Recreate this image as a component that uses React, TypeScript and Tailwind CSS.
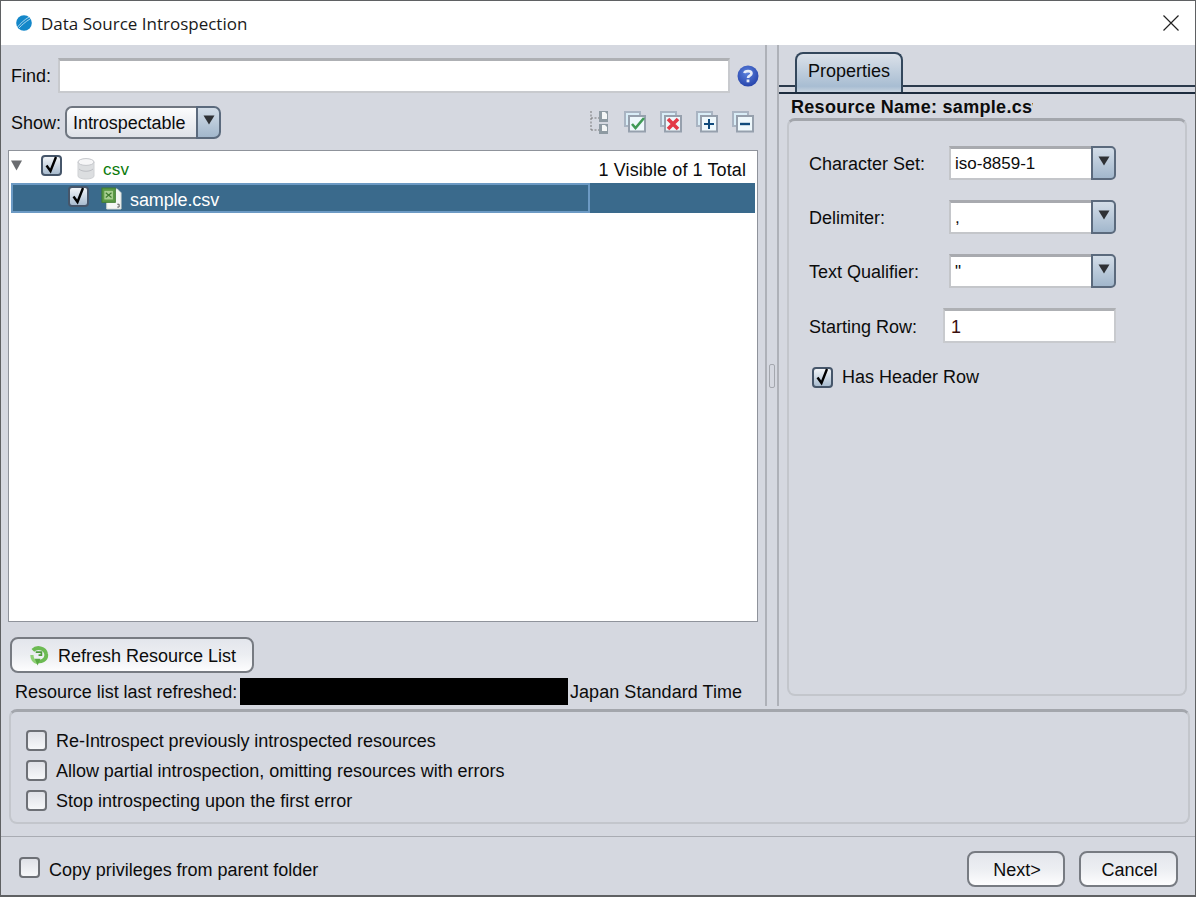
import React from "react";

const body = "font-['Liberation_Sans',Arial,sans-serif] text-[18px] leading-[22px] text-[#0c0c0c]";

function CheckBox({ checked, className = "" }: { checked?: boolean; className?: string }) {
  return (
    <div
      className={`relative w-[21px] h-[21px] shrink-0 rounded-[4px] border-2 ${
        checked
          ? "border-[#46566a] bg-gradient-to-b from-[#f2f5f8] to-[#a9bccf]"
          : "border-[#6d7076] bg-gradient-to-b from-[#dfe1e7] to-[#f6f7f9]"
      } ${className}`}
    >
      {checked && (
        <svg viewBox="0 0 21 21" className="absolute left-[-2px] top-[-3px] w-[21px] h-[21px]">
          <path d="M5.5 11.5 L9.5 17 L15 3" fill="none" stroke="#000" strokeWidth="2.4" />
        </svg>
      )}
    </div>
  );
}

function Arrow() {
  return (
    <svg viewBox="0 0 12 10" className="w-[12px] h-[10px]">
      <path d="M0.5 0.5 H11.5 L6 9.5 Z" fill="#2e3135" />
    </svg>
  );
}

function Combo({ value, label }: { value: string; label: string }) {
  return (
    <div className="flex items-center h-[34px]">
      <div className="w-[140px] shrink-0 pt-[2px]">{label}</div>
      <div className="flex w-[167px] h-[34px]">
        <div className="flex-1 bg-white border-t-[3px] border-t-[#a8aaaf] border-l-2 border-l-[#c4c6ca] border-b-2 border-b-[#c4c6ca] pl-[4px] pt-[4px] text-[17px]">
          {value}
        </div>
        <div className="w-[25px] flex justify-center pt-[8px] rounded-r-[5px] border-2 border-[#5b6a7d] bg-gradient-to-b from-[#d3dde8] to-[#a2b7cc]">
          <Arrow />
        </div>
      </div>
    </div>
  );
}

function Logo() {
  return (
    <svg viewBox="0 0 16 16" className="w-[16px] h-[16px] mb-[1px]">
      <circle cx="8" cy="8" r="7.8" fill="#1387c9" />
      <path d="M1.5 12 C5 8 8 5 13 2 M3 13 C6 10 9 7 14 4" stroke="#cfe8f6" strokeWidth="0.8" fill="none" />
    </svg>
  );
}

function HelpIcon() {
  return (
    <svg viewBox="0 0 22 22" className="w-[22px] h-[22px]">
      <defs>
        <radialGradient id="helpBlue" cx="45%" cy="35%" r="70%">
          <stop offset="0%" stopColor="#5b82dd" />
          <stop offset="100%" stopColor="#2440a8" />
        </radialGradient>
      </defs>
      <circle cx="11" cy="11" r="10.5" fill="url(#helpBlue)" />
      <path d="M7.5 8.2 C7.8 5.5 14.5 5.2 14.5 8.5 C14.5 10.8 11 10.6 11 13" fill="none" stroke="#e6ecf8" strokeWidth="2.6" />
      <rect x="9.6" y="14.5" width="2.8" height="2.8" fill="#e6ecf8" />
    </svg>
  );
}

function TreeIcon() {
  return (
    <svg viewBox="0 0 20 24" className="w-[20px] h-[24px]">
      <path d="M1 1 V20 M1 8 H10 M1 20 H10" stroke="#777" strokeWidth="1" strokeDasharray="2 1.5" fill="none" />
      <rect x="9" y="1" width="9" height="11" fill="#8e9aa2" />
      <path d="M12 2 H15 L17 4 V9 H12 Z" fill="#f4f6f6" />
      <rect x="9" y="14" width="9" height="10" fill="#8e9aa2" />
      <path d="M12 15 H15 L17 17 V21 H12 Z" fill="#f4f6f6" />
    </svg>
  );
}

function ToolIcon({ children }: { children: React.ReactNode }) {
  return (
    <svg viewBox="0 0 22 22" className="w-[22px] h-[22px]">
      <rect x="1" y="1" width="15" height="14" fill="#d9edf7" stroke="#a9b4c2" strokeWidth="2" />
      <rect x="5" y="5" width="16" height="15.5" fill="#eef8fc" stroke="#96a0ad" strokeWidth="2" />
      {children}
    </svg>
  );
}

function DbIcon() {
  return (
    <svg viewBox="0 0 18 22" className="w-[18px] h-[22px]">
      <path d="M1 4 V18 C1 22 17 22 17 18 V4 Z" fill="#dcdee0" stroke="#cfd1d4" />
      <ellipse cx="9" cy="4" rx="8" ry="3.4" fill="#f6f6f7" stroke="#c4c6ca" />
      <path d="M2 11 C5 14 13 14 16 11" stroke="#bcbec3" fill="none" />
    </svg>
  );
}

function SheetIcon() {
  return (
    <svg viewBox="0 0 22 24" className="w-[21px] h-[23px]">
      <path d="M6 2 H17 L21 6 V23 H6 Z" fill="#f5f7f5" stroke="#d5dbd5" />
      <rect x="1" y="1" width="14" height="15" fill="#5c9a45" stroke="#3e7b2e" />
      <rect x="3.5" y="4" width="9" height="9" fill="#a9cf92" />
      <path d="M5 6 L11 11 M11 6 L5 11" stroke="#3e7b2e" strokeWidth="1.2" />
      <path d="M17 18 H19 V21 H17" stroke="#555" fill="none" />
    </svg>
  );
}

function RefreshIcon() {
  return (
    <svg viewBox="0 0 20 20" className="w-[19px] h-[20px] ml-[2px]">
      <path d="M3 4 C7 0 16 1 17 8 C18 14 11 17 7 15" fill="none" stroke="#6cba53" strokeWidth="4" />
      <path d="M2 9 C2 13 4 16 8 17" fill="none" stroke="#8fd076" strokeWidth="3.4" />
      <path d="M6 6 H12 V9 H9" fill="none" stroke="#4f9c3c" strokeWidth="1.8" />
      <path d="M5 13 L11 13 L8 20 Z" fill="#58a942" />
    </svg>
  );
}

function Button({ children, className = "" }: { children: React.ReactNode; className?: string }) {
  return (
    <div
      className={`flex items-center justify-center h-[36px] rounded-[8px] border-2 border-[#777b82] bg-gradient-to-b from-[#e3e6ec] via-[#eceef2] to-[#fdfdfe] ${className}`}
    >
      {children}
    </div>
  );
}

function Panel({ className = "", children }: { className?: string; children?: React.ReactNode }) {
  return (
    <div
      className={`rounded-[8px] border-2 border-[#c3c6cc] border-t-[3px] border-t-[#a3a6ac] ${className}`}
    >
      {children}
    </div>
  );
}

export default function App() {
  return (
    <div className={`w-[1196px] h-[897px] bg-white flex flex-col border border-b-2 border-[#5f6163] overflow-hidden ${body}`}>
      {/* Title bar */}
      <div className="h-[44px] shrink-0 bg-white flex items-center pl-[15px] pr-[16px]">
        <Logo />
        <span className="ml-[9px] pt-[1px] font-['Open_Sans',sans-serif] text-[17px] text-[#1a1a1a]">Data Source Introspection</span>
        <svg viewBox="0 0 16 16" className="w-[16px] h-[16px] ml-auto">
          <path d="M0.5 0.5 L15.5 15.5 M15.5 0.5 L0.5 15.5" stroke="#222" strokeWidth="1.2" />
        </svg>
      </div>

      <div className="flex-1 flex flex-col bg-[#d5d8e0]">
        <div className="flex h-[661px] shrink-0">
          {/* Left pane */}
          <div className="w-[764px] shrink-0 pl-[7px] pr-[6px] flex flex-col">
            <div className="flex items-center h-[35px] mt-[13px]">
              <span className="w-[50px] pl-[3px] shrink-0">Find:</span>
              <div className="w-[674px] h-[35px] bg-white border-t-[3px] border-t-[#aeb0b4] border-x-2 border-x-[#c8cace] border-b-2 border-b-[#c8cace]" />
              <div className="ml-[7px]">
                <HelpIcon />
              </div>
            </div>

            <div className="flex items-center h-[33px] mt-[13px]">
              <span className="w-[57px] pl-[3px] shrink-0">Show:</span>
              <div className="flex w-[156px] h-[33px]">
                <div className="flex-1 rounded-l-[7px] border-2 border-r-0 border-[#6f7680] bg-gradient-to-b from-[#fbfcfd] to-[#dfe2e8] pl-[6px] pt-[4px] tracking-[-0.05px]">
                  Introspectable
                </div>
                <div className="w-[25px] flex justify-center pt-[7px] rounded-r-[7px] border-2 border-[#5b6a7d] bg-gradient-to-b from-[#d3dde8] to-[#a2b7cc]">
                  <Arrow />
                </div>
              </div>
              <div className="ml-auto flex items-center gap-[14px] pr-[5px] mb-[2px]">
                <TreeIcon />
                <ToolIcon>
                  <path d="M8 13 L11.5 17 L20 7" fill="none" stroke="#3f9a56" strokeWidth="2.6" />
                </ToolIcon>
                <ToolIcon>
                  <path d="M8 8 L18 18 M18 8 L8 18" fill="none" stroke="#e23a48" strokeWidth="3.6" />
                </ToolIcon>
                <ToolIcon>
                  <path d="M8 13 H18 M13 8 V18" fill="none" stroke="#0f4a7c" strokeWidth="2" />
                </ToolIcon>
                <ToolIcon>
                  <path d="M8 13 H18" fill="none" stroke="#0f4a7c" strokeWidth="2.4" />
                </ToolIcon>
              </div>
            </div>

            {/* Tree */}
            <div className="mt-[11px] w-[750px] h-[472px] shrink-0 bg-white border border-[#8f939b] pt-[1px] px-[2px]">
              <div className="flex items-center h-[31px] relative">
                <svg viewBox="0 0 12 11" className="absolute left-[0px] top-[8px] w-[11px] h-[11px]">
                  <path d="M0 0 H12 L6 11 Z" fill="#6a6c70" />
                </svg>
                <CheckBox checked className="ml-[30px] mb-[4px]" />
                <div className="ml-[15px] mt-[3px]">
                  <DbIcon />
                </div>
                <span className="ml-[8px] mt-[5px] text-[#0b7a0b] text-[17px] tracking-[0.3px]">csv</span>
                <span className="ml-auto mr-[9px] mt-[4px] tracking-[0.1px]">1 Visible of 1 Total</span>
              </div>
              <div className="flex h-[30px] bg-[#3a6a8c] text-white">
                <div className="w-[579px] flex items-center border-2 border-[#6c9ac4]">
                  <CheckBox checked className="ml-[55px] mb-[3px] border-[#2c3a4a]" />
                  <div className="ml-[12px]">
                    <SheetIcon />
                  </div>
                  <span className="ml-[8px] pt-[3px] tracking-[-0.1px]">sample.csv</span>
                </div>
              </div>
            </div>

            <Button className="mt-[15px] ml-[2px] w-[244px] shrink-0 pt-[1px]">
              <RefreshIcon />
              <span className="ml-[8px] pl-[1px]">Refresh Resource List</span>
            </Button>

            <div className="flex items-center h-[27px] mt-[5px] pl-[7px]">
              <span className="w-[225px] shrink-0 pt-[1px] tracking-[-0.03px]">Resource list last refreshed:</span>
              <div className="w-[328px] h-[27px] bg-black" />
              <span className="ml-[2px] pt-[1px] tracking-[0.05px]">Japan Standard Time</span>
            </div>
          </div>

          {/* Splitter */}
          <div className="w-[14px] shrink-0 flex items-center justify-center border-x-2 border-x-[#aeb1b8]">
            <div className="w-[6px] h-[24px] rounded-[2px] border border-[#a4a7ae]" />
          </div>

          {/* Right pane */}
          <div className="flex-1 flex flex-col pt-[7px]">
            <div className="h-[40px] flex shrink-0">
              <div className="w-[16px] h-[35px] border-b-2 border-b-[#2b3a4c]" />
              <div className="w-[108px] h-[40px] rounded-t-[8px] border-x-2 border-t-2 border-[#33475c] bg-gradient-to-b from-[#dbe1e9] via-[#a8bdd2] via-85% to-[#c6d2df] text-center pt-[6px]">
                Properties
              </div>
              <div className="flex-1 h-[35px] border-b-2 border-b-[#2b3a4c]" />
            </div>
            <div className="h-[2px] bg-[#1d2c3e] shrink-0" />
            <div className="pl-[12px] h-[24px] pt-[2px] font-bold overflow-hidden w-[254px] shrink-0 whitespace-nowrap tracking-[0.3px]">
              Resource Name: sample.csv
            </div>
            <Panel className="ml-[8px] mr-[8px] h-[578px] pl-[20px] pr-[19px] pt-[25px] flex flex-col">
              <div className="flex flex-col gap-[20px]">
                <Combo label="Character Set:" value="iso-8859-1" />
                <Combo label="Delimiter:" value="," />
                <Combo label="Text Qualifier:" value={'"'} />
              </div>
              <div className="flex items-center h-[35px] mt-[20px]">
                <span className="w-[134px] shrink-0 pt-[2px]">Starting Row:</span>
                <div className="w-[173px] h-[35px] bg-white border-t-[3px] border-t-[#aeb0b4] border-x-2 border-x-[#c8cace] border-b-2 border-b-[#c8cace] pl-[6px] pt-[5px] text-[#3a0f0f]">
                  1
                </div>
              </div>
              <div className="flex items-center gap-[9px] mt-[23px] ml-[3px]">
                <CheckBox checked />
                <span>Has Header Row</span>
              </div>
            </Panel>
          </div>
        </div>

        {/* Options */}
        <Panel className="ml-[8px] mr-[5px] mt-[3px] h-[115px] shrink-0 pl-[15px] pt-[16px] flex flex-col gap-[6px]">
          <div className="flex items-center gap-[9px]">
            <CheckBox />
            <span className="pt-[2px] tracking-[-0.03px]">Re-Introspect previously introspected resources</span>
          </div>
          <div className="flex items-center gap-[9px]">
            <CheckBox />
            <span className="pt-[2px] tracking-[-0.03px]">Allow partial introspection, omitting resources with errors</span>
          </div>
          <div className="flex items-center gap-[9px]">
            <CheckBox />
            <span className="pt-[2px]">Stop introspecting upon the first error</span>
          </div>
        </Panel>

        <div className="mt-[12px] h-[1px] bg-[#a9acb3] shrink-0" />

        {/* Footer */}
        <div className="flex-1 flex items-center pl-[18px] pr-[17px] pt-[5px]">
          <CheckBox className="mb-[2px]" />
          <span className="ml-[9px] pt-[2px] tracking-[-0.03px]">Copy privileges from parent folder</span>
          <Button className="ml-auto w-[98px] border-[#5d6066] pt-[3px] pl-[2px]">Next&gt;</Button>
          <Button className="ml-[14px] w-[99px] pt-[3px] pl-[2px]">Cancel</Button>
        </div>
      </div>
    </div>
  );
}
